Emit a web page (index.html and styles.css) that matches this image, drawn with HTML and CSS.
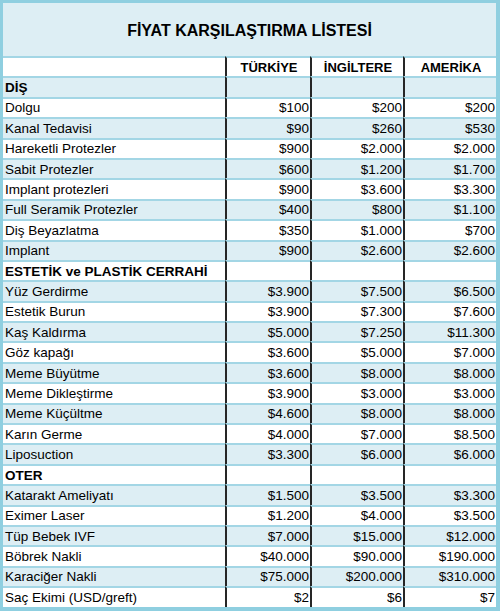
FILE: index.html
```html
<!DOCTYPE html>
<html lang="tr">
<head>
    <meta charset="UTF-8">
    <title>Fiyat Karşılaştırma Listesi</title>
    <link rel="stylesheet" href="styles.css">
</head>
<body>
    <div class="frame">
        <h1 class="title">FİYAT KARŞILAŞTIRMA LİSTESİ</h1>
        <table class="prices">
            <colgroup>
                <col class="col-name">
                <col class="col-tr">
                <col class="col-uk">
                <col class="col-us">
            </colgroup>
            <tr class="head">
                <td></td>
                <td>TÜRKİYE</td>
                <td>İNGİLTERE</td>
                <td>AMERİKA</td>
            </tr>
            <tr class="group"><td>DİŞ</td><td></td><td></td><td></td></tr>
            <tr><td>Dolgu</td><td>$100</td><td>$200</td><td>$200</td></tr>
            <tr><td>Kanal Tedavisi</td><td>$90</td><td>$260</td><td>$530</td></tr>
            <tr><td>Hareketli Protezler</td><td>$900</td><td>$2.000</td><td>$2.000</td></tr>
            <tr><td>Sabit Protezler</td><td>$600</td><td>$1.200</td><td>$1.700</td></tr>
            <tr><td>Implant protezleri</td><td>$900</td><td>$3.600</td><td>$3.300</td></tr>
            <tr><td>Full Seramik Protezler</td><td>$400</td><td>$800</td><td>$1.100</td></tr>
            <tr><td>Diş Beyazlatma</td><td>$350</td><td>$1.000</td><td>$700</td></tr>
            <tr><td>Implant</td><td>$900</td><td>$2.600</td><td>$2.600</td></tr>
            <tr class="group"><td>ESTETİK ve PLASTİK CERRAHİ</td><td></td><td></td><td></td></tr>
            <tr><td>Yüz Gerdirme</td><td>$3.900</td><td>$7.500</td><td>$6.500</td></tr>
            <tr><td>Estetik Burun</td><td>$3.900</td><td>$7.300</td><td>$7.600</td></tr>
            <tr><td>Kaş Kaldırma</td><td>$5.000</td><td>$7.250</td><td>$11.300</td></tr>
            <tr><td>Göz kapağı</td><td>$3.600</td><td>$5.000</td><td>$7.000</td></tr>
            <tr><td>Meme Büyütme</td><td>$3.600</td><td>$8.000</td><td>$8.000</td></tr>
            <tr><td>Meme Dikleştirme</td><td>$3.900</td><td>$3.000</td><td>$3.000</td></tr>
            <tr><td>Meme Küçültme</td><td>$4.600</td><td>$8.000</td><td>$8.000</td></tr>
            <tr><td>Karın Germe</td><td>$4.000</td><td>$7.000</td><td>$8.500</td></tr>
            <tr><td>Liposuction</td><td>$3.300</td><td>$6.000</td><td>$6.000</td></tr>
            <tr class="group"><td>OTER</td><td></td><td></td><td></td></tr>
            <tr><td>Katarakt Ameliyatı</td><td>$1.500</td><td>$3.500</td><td>$3.300</td></tr>
            <tr><td>Eximer Laser</td><td>$1.200</td><td>$4.000</td><td>$3.500</td></tr>
            <tr><td>Tüp Bebek IVF</td><td>$7.000</td><td>$15.000</td><td>$12.000</td></tr>
            <tr><td>Böbrek Nakli</td><td>$40.000</td><td>$90.000</td><td>$190.000</td></tr>
            <tr><td>Karaciğer Nakli</td><td>$75.000</td><td>$200.000</td><td>$310.000</td></tr>
            <tr><td>Saç Ekimi (USD/greft)</td><td>$2</td><td>$6</td><td>$7</td></tr>
        </table>
    </div>
</body>
</html>
```

FILE: styles.css
```css
body {
    margin: 0;
    padding: 0;
    background-color: #8fcfe0;
    font-family: 'Liberation Sans', Arial, sans-serif;
    color: #000;
}

.frame {
    width: 500px;
    height: 611px;
    box-sizing: border-box;
    border: solid #8fcfe0;
    border-width: 3px 4px 4px 3px;
    background-color: #ddeef4;
}

.title {
    margin: 0;
    height: 53px;
    display: flex;
    align-items: center;
    justify-content: center;
    font-size: 16px;
    font-weight: bold;
    padding-top: 2px;
    box-sizing: border-box;
}

.prices {
    width: 493px;
    border-collapse: separate;
    border-spacing: 0;
    table-layout: fixed;
    font-size: 13.5px;
}

.col-name { width: 222px; }
.col-tr { width: 85px; }
.col-uk { width: 93px; }
.col-us { width: 93px; }

.prices tr {
    height: 20.4px;
}

.prices td {
    border-top: 2px solid #a3d6e5;
    padding: 1px 1px 0 2px;
    white-space: nowrap;
    line-height: 16px;
    text-align: right;
}

.prices td:first-child {
    text-align: left;
}

.prices td + td {
    border-left: 2px solid #262626;
}

/* чередование фона строк */
.prices tr:nth-child(odd) td { background-color: #fff; }
.prices tr:nth-child(even) td { background-color: #ddeef4; }

.head td {
    font-size: 13px;
    font-weight: bold;
    text-align: center;
}

.group td {
    font-weight: bold;
}
```
